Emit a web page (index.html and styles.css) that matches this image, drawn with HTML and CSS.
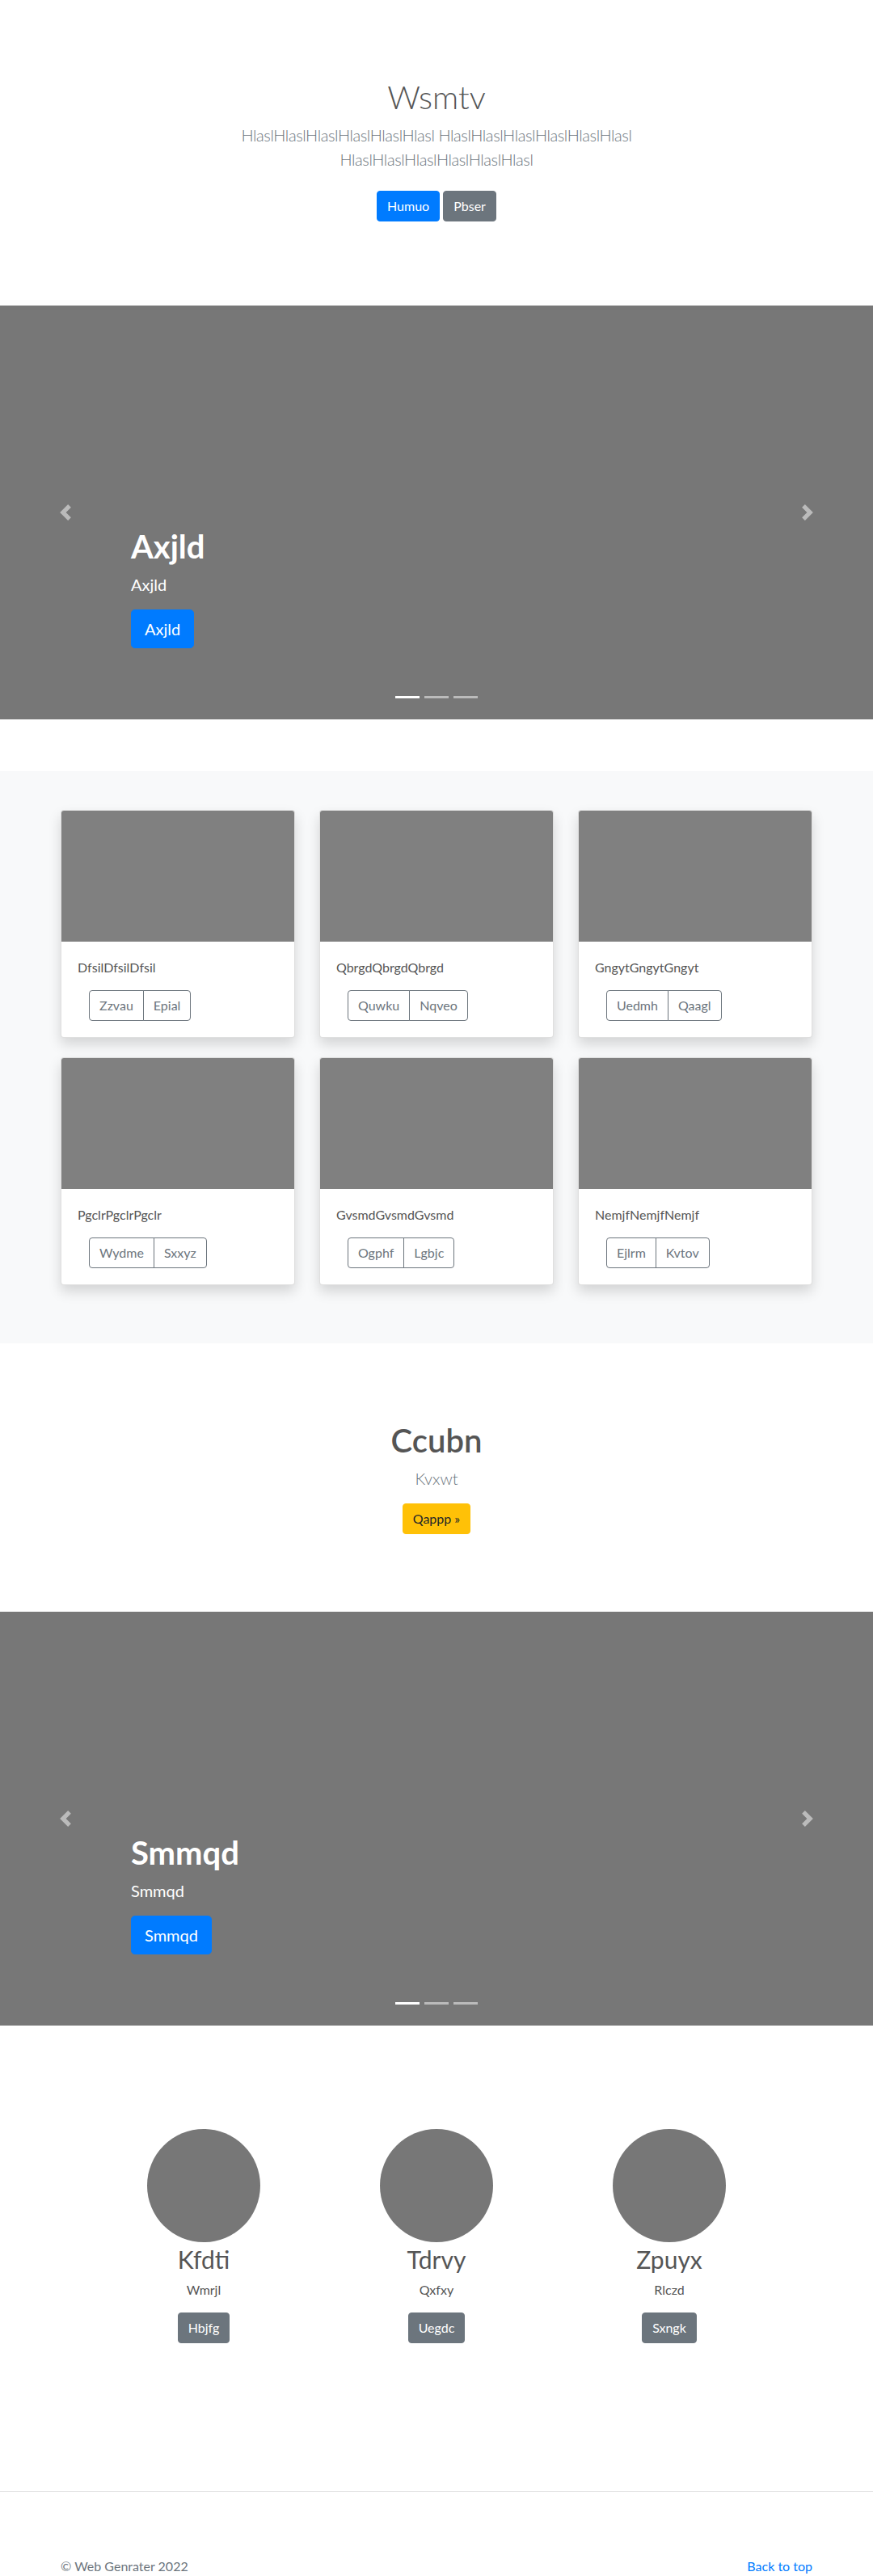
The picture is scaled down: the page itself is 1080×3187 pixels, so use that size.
FILE: index.html
```html
<!DOCTYPE html>
<html lang="en">
<head>
<meta charset="utf-8">
<title>Wsmtv</title>
<link rel="stylesheet" href="styles.css">
</head>
<body>
<main>
  <section class="hero">
    <div class="hero-inner">
      <h1 class="hero-title">Wsmtv</h1>
      <p class="lead muted hero-lead">HlaslHlaslHlaslHlaslHlaslHlasl HlaslHlaslHlaslHlaslHlaslHlasl HlaslHlaslHlaslHlaslHlaslHlasl</p>
      <div class="hero-actions">
        <a class="btn btn-primary" href="#">Humuo</a>
        <a class="btn btn-secondary" href="#">Pbser</a>
      </div>
    </div>
  </section>

  <div class="carousel">
    <div class="caption">
      <h2 class="caption-title">Axjld</h2>
      <p class="caption-text">Axjld</p>
      <div class="caption-actions"><a class="btn btn-lg btn-primary" href="#">Axjld</a></div>
    </div>
    <a class="ctrl ctrl-prev" href="#" aria-label="Previous">
      <svg class="ctrl-icon" viewBox="0 0 8 8" width="20" height="20"><path d="M5.25 0l-4 4 4 4 1.5-1.5L4.25 4l2.5-2.5L5.25 0z" fill="#fff"/></svg>
    </a>
    <a class="ctrl ctrl-next" href="#" aria-label="Next">
      <svg class="ctrl-icon" viewBox="0 0 8 8" width="20" height="20"><path d="M2.75 0l-1.5 1.5L3.75 4l-2.5 2.5L2.75 8l4-4-4-4z" fill="#fff"/></svg>
    </a>
    <ol class="indicators">
      <li class="active"></li>
      <li></li>
      <li></li>
    </ol>
  </div>

  <section class="album">
    <div class="container">
      <div class="card-grid">
        <div class="card">
          <div class="card-img"></div>
          <div class="card-body">
            <p class="card-text">DfsilDfsilDfsil</p>
            <div class="btn-group"><a class="btn btn-outline" href="#">Zzvau</a><a class="btn btn-outline" href="#">Epial</a></div>
          </div>
        </div>
        <div class="card">
          <div class="card-img"></div>
          <div class="card-body">
            <p class="card-text">QbrgdQbrgdQbrgd</p>
            <div class="btn-group"><a class="btn btn-outline" href="#">Quwku</a><a class="btn btn-outline" href="#">Nqveo</a></div>
          </div>
        </div>
        <div class="card">
          <div class="card-img"></div>
          <div class="card-body">
            <p class="card-text">GngytGngytGngyt</p>
            <div class="btn-group"><a class="btn btn-outline" href="#">Uedmh</a><a class="btn btn-outline" href="#">Qaagl</a></div>
          </div>
        </div>
        <div class="card">
          <div class="card-img"></div>
          <div class="card-body">
            <p class="card-text">PgclrPgclrPgclr</p>
            <div class="btn-group"><a class="btn btn-outline" href="#">Wydme</a><a class="btn btn-outline" href="#">Sxxyz</a></div>
          </div>
        </div>
        <div class="card">
          <div class="card-img"></div>
          <div class="card-body">
            <p class="card-text">GvsmdGvsmdGvsmd</p>
            <div class="btn-group"><a class="btn btn-outline" href="#">Ogphf</a><a class="btn btn-outline" href="#">Lgbjc</a></div>
          </div>
        </div>
        <div class="card">
          <div class="card-img"></div>
          <div class="card-body">
            <p class="card-text">NemjfNemjfNemjf</p>
            <div class="btn-group"><a class="btn btn-outline" href="#">Ejlrm</a><a class="btn btn-outline" href="#">Kvtov</a></div>
          </div>
        </div>
      </div>
    </div>
  </section>

  <section class="cta">
    <h2 class="cta-title">Ccubn</h2>
    <p class="lead muted">Kvxwt</p>
    <div class="cta-actions"><a class="btn btn-warning" href="#">Qappp &raquo;</a></div>
  </section>

  <div class="carousel">
    <div class="caption">
      <h2 class="caption-title">Smmqd</h2>
      <p class="caption-text">Smmqd</p>
      <div class="caption-actions"><a class="btn btn-lg btn-primary" href="#">Smmqd</a></div>
    </div>
    <a class="ctrl ctrl-prev" href="#" aria-label="Previous">
      <svg class="ctrl-icon" viewBox="0 0 8 8" width="20" height="20"><path d="M5.25 0l-4 4 4 4 1.5-1.5L4.25 4l2.5-2.5L5.25 0z" fill="#fff"/></svg>
    </a>
    <a class="ctrl ctrl-next" href="#" aria-label="Next">
      <svg class="ctrl-icon" viewBox="0 0 8 8" width="20" height="20"><path d="M2.75 0l-1.5 1.5L3.75 4l-2.5 2.5L2.75 8l4-4-4-4z" fill="#fff"/></svg>
    </a>
    <ol class="indicators">
      <li class="active"></li>
      <li></li>
      <li></li>
    </ol>
  </div>

  <section class="team">
    <div class="team-grid">
      <div class="member">
        <div class="avatar"></div>
        <h2 class="member-name">Kfdti</h2>
        <p class="member-role">Wmrjl</p>
        <a class="btn btn-secondary" href="#">Hbjfg</a>
      </div>
      <div class="member">
        <div class="avatar"></div>
        <h2 class="member-name">Tdrvy</h2>
        <p class="member-role">Qxfxy</p>
        <a class="btn btn-secondary" href="#">Uegdc</a>
      </div>
      <div class="member">
        <div class="avatar"></div>
        <h2 class="member-name">Zpuyx</h2>
        <p class="member-role">Rlczd</p>
        <a class="btn btn-secondary" href="#">Sxngk</a>
      </div>
    </div>
  </section>
</main>

<footer class="footer">
  <div class="container footer-inner">
    <p class="copy">&copy; Web Genrater 2022</p>
    <a class="top-link" href="#">Back to top</a>
  </div>
</footer>
</body>
</html>
```

FILE: styles.css
```css
* {
  box-sizing: border-box;
}

html,
body {
  margin: 0;
  padding: 0;
}

body {
  font-family: "Lato", "Noto Sans", sans-serif;
  font-size: 16px;
  line-height: 1.5;
  color: #555;
  background: #fff;
}

h1,
h2,
p {
  margin: 0;
}

a {
  text-decoration: none;
}

.container {
  width: 960px;
  margin: 0 auto;
  padding: 0 15px;
}

.muted {
  color: #6c757d;
}

.lead {
  font-size: 20px;
  font-weight: 300;
  line-height: 30px;
  margin-bottom: 16px;
}

/* Buttons */
.btn {
  display: inline-block;
  font-size: 16px;
  line-height: 24px;
  padding: 6px 12px;
  border: 1px solid transparent;
  border-radius: 4px;
  font-weight: 400;
  text-align: center;
  white-space: nowrap;
}

.btn-lg {
  font-size: 20px;
  line-height: 30px;
  padding: 8px 16px;
  border-radius: 4.8px;
}

.btn-primary {
  background: #007bff;
  border-color: #007bff;
  color: #fff;
}

.btn-secondary {
  background: #6c757d;
  border-color: #6c757d;
  color: #fff;
}

.btn-warning {
  background: #ffc107;
  border-color: #ffc107;
  color: #212529;
}

.btn-outline {
  background: transparent;
  border-color: #6c757d;
  color: #6c757d;
}

/* Hero */
.hero {
  padding: 96px 0;
  text-align: center;
}

.hero-inner {
  max-width: 640px;
  margin: 0 auto;
  padding: 0 15px;
}

.hero-title {
  font-size: 40px;
  font-weight: 300;
  line-height: 48px;
  margin-bottom: 8px;
  color: #555;
}

.hero-lead {
  letter-spacing: -0.4px;
}

.hero-actions {
  display: flex;
  justify-content: center;
  gap: 4px;
  padding: 8px 0;
}

/* Carousel */
.carousel {
  position: relative;
  height: 512px;
  background: #777;
  margin-bottom: 64px;
  overflow: hidden;
}

.caption {
  position: absolute;
  left: 15%;
  right: 15%;
  bottom: 52px;
  padding: 20px 0;
  color: #fff;
  text-align: left;
  z-index: 2;
}

.caption-title {
  font-size: 40px;
  font-weight: 700;
  line-height: 48px;
  margin-bottom: 8px;
}

.caption-text {
  font-size: 20px;
  line-height: 30px;
  margin-bottom: 16px;
}

.caption-actions {
  display: flex;
  margin-bottom: 16px;
}

.ctrl {
  position: absolute;
  top: 0;
  bottom: 0;
  width: 15%;
  display: flex;
  align-items: center;
  justify-content: center;
  opacity: 0.5;
  z-index: 1;
}

.ctrl-prev {
  left: 0;
}

.ctrl-next {
  right: 0;
}

.ctrl-icon {
  display: block;
  width: 20px;
  height: 20px;
}

.indicators {
  position: absolute;
  left: 0;
  right: 0;
  bottom: 0;
  display: flex;
  justify-content: center;
  list-style: none;
  padding: 0;
  margin: 0 15% 16px;
  z-index: 3;
}

.indicators li {
  width: 30px;
  height: 23px;
  margin: 0 3px;
  border-top: 10px solid transparent;
  border-bottom: 10px solid transparent;
  background: #fff;
  background-clip: padding-box;
  opacity: 0.5;
}

.indicators li.active {
  opacity: 1;
}

/* Album */
.album {
  background: #f8f9fa;
  padding: 48px 0 72px;
}

.card-grid {
  display: grid;
  grid-template-columns: repeat(3, 1fr);
  column-gap: 30px;
  row-gap: 24px;
}

.card {
  background: #fff;
  border: 1px solid rgba(0, 0, 0, 0.125);
  border-radius: 4px;
  box-shadow: 0 8px 16px rgba(0, 0, 0, 0.15);
  overflow: hidden;
}

.card-img {
  height: 162px;
  background: #808080;
}

.card-body {
  padding: 20px;
}

.card-text {
  font-size: 16px;
  line-height: 24px;
  margin-bottom: 16px;
}

.btn-group {
  display: inline-flex;
  margin-left: 14px;
}

.btn-group .btn {
  border-radius: 0;
}

.btn-group .btn:first-child {
  border-radius: 4px 0 0 4px;
}

.btn-group .btn + .btn {
  margin-left: -1px;
  border-radius: 0 4px 4px 0;
}

/* CTA */
.cta {
  padding: 96px 0;
  text-align: center;
}

.cta-title {
  font-size: 40px;
  font-weight: 600;
  line-height: 48px;
  margin-bottom: 8px;
  color: #555;
}

.cta-actions {
  display: flex;
  justify-content: center;
}

/* Team */
.team {
  padding: 64px 0 183px;
}

.team-grid {
  width: 960px;
  margin: 0 auto;
  padding: 0 48px;
  display: grid;
  grid-template-columns: repeat(3, 1fr);
}

.member {
  text-align: center;
}

.avatar {
  width: 140px;
  height: 140px;
  border-radius: 50%;
  background: #777;
  margin: 0 auto;
}

.member-name {
  font-size: 30px;
  font-weight: 400;
  line-height: 36px;
  margin: 3px 0 8px;
  color: #555;
}

.member-role {
  font-size: 16px;
  line-height: 24px;
  margin-bottom: 16px;
}

/* Footer */
.footer {
  border-top: 1px solid #e5e5e5;
  padding-top: 80px;
  color: #6c757d;
}

.footer-inner {
  display: flex;
  justify-content: space-between;
}

.copy {
  line-height: 24px;
}

.top-link {
  color: #007bff;
  line-height: 24px;
}
```
